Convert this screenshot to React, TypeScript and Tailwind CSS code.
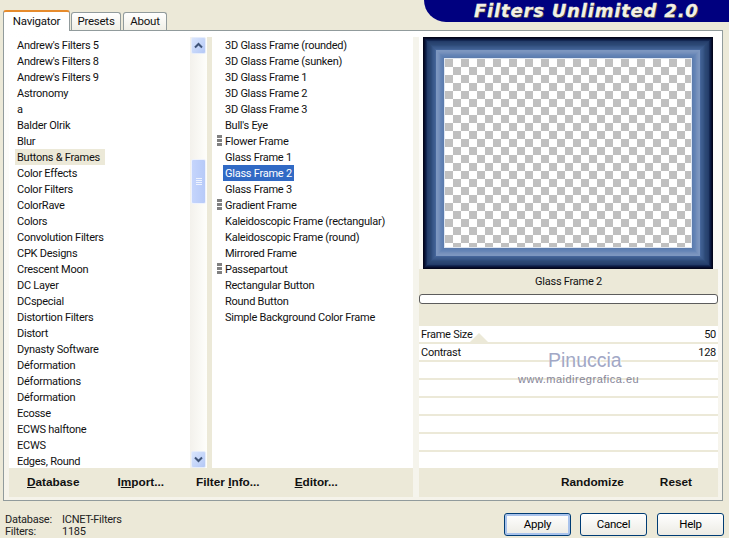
const leftItems = [
  "Andrew's Filters 5",
  "Andrew's Filters 8",
  "Andrew's Filters 9",
  'Astronomy',
  'a',
  'Balder Olrik',
  'Blur',
  'Buttons & Frames',
  'Color Effects',
  'Color Filters',
  'ColorRave',
  'Colors',
  'Convolution Filters',
  'CPK Designs',
  'Crescent Moon',
  'DC Layer',
  'DCspecial',
  'Distortion Filters',
  'Distort',
  'Dynasty Software',
  'Déformation',
  'Déformations',
  'Déformation',
  'Ecosse',
  'ECWS halftone',
  'ECWS',
  'Edges, Round',
];

const middleItems = [
  { name: '3D Glass Frame (rounded)' },
  { name: '3D Glass Frame (sunken)' },
  { name: '3D Glass Frame 1' },
  { name: '3D Glass Frame 2' },
  { name: '3D Glass Frame 3' },
  { name: "Bull's Eye" },
  { name: 'Flower Frame', marked: true },
  { name: 'Glass Frame 1' },
  { name: 'Glass Frame 2', selected: true },
  { name: 'Glass Frame 3' },
  { name: 'Gradient Frame', marked: true },
  { name: 'Kaleidoscopic Frame (rectangular)' },
  { name: 'Kaleidoscopic Frame (round)' },
  { name: 'Mirrored Frame' },
  { name: 'Passepartout', marked: true },
  { name: 'Rectangular Button' },
  { name: 'Round Button' },
  { name: 'Simple Background Color Frame' },
];

// concentric bands of the preview, outside to inside
const bands = [
  '#03061c', '#060d2c', '#0c1a40', '#142853', '#233c69', '#27416e', '#2a4572', '#2c4874',
  '#2f4d7c', '#365485', '#3b5a8b', '#3e5e90', '#45659a', '#7d97c0', '#7b95bf', '#7791bc',
  '#718dba', '#6887b7', '#6383b5', '#5f80b2', '#5c7cae', '#dfe6f0',
];

function ScrollArrow({ up }: { up?: boolean }) {
  return (
    <div className="h-[17px] w-[15px] mx-auto rounded-[2px] border border-[#e6edfb] bg-gradient-to-br from-[#d9e5fc] to-[#b4c8f6] flex items-center justify-center">
      <svg width="9" height="7" viewBox="0 0 9 7">
        <polyline
          points={up ? '1,5.5 4.5,2 8,5.5' : '1,1.5 4.5,5 8,1.5'}
          fill="none"
          stroke="#3f5478"
          strokeWidth="2"
        />
      </svg>
    </div>
  );
}

function Scrollbar() {
  return (
    <div className="w-[17px] shrink-0 bg-gradient-to-r from-[#f3f1ec] to-[#fefefb] flex flex-col">
      <ScrollArrow up />
      <div className="flex-1">
        <div className="mt-[105px] h-[45px] w-[15px] mx-auto rounded-[2px] border border-[#eef2fd] bg-gradient-to-r from-[#c5d5fc] to-[#b7caf8] flex flex-col items-center justify-center gap-px">
          <div className="h-px w-[6px] bg-[#eef3fe]" />
          <div className="h-px w-[6px] bg-[#eef3fe]" />
          <div className="h-px w-[6px] bg-[#eef3fe]" />
          <div className="h-px w-[6px] bg-[#eef3fe]" />
        </div>
      </div>
      <ScrollArrow />
    </div>
  );
}

function Marker() {
  return (
    <div className="absolute left-[-6px] top-[2px] w-[5px] flex flex-col gap-px">
      <div className="h-[3px] bg-[#808080]" />
      <div className="h-[3px] bg-[#808080]" />
      <div className="h-[3px] bg-[#808080]" />
    </div>
  );
}

function Preview() {
  return (
    <svg width="290" height="232" viewBox="0 0 290 232" className="block">
      <defs>
        <pattern id="checker" width="16" height="16" patternUnits="userSpaceOnUse" x="22" y="22">
          <rect width="16" height="16" fill="#ffffff" />
          <rect width="8" height="8" fill="#c0c0c0" />
          <rect x="8" y="8" width="8" height="8" fill="#c0c0c0" />
        </pattern>
      </defs>
      <rect width="290" height="232" fill="#05081f" />
      {bands.map((color, i) => (
        <rect key={i} x={i} y={i} width={290 - i * 2} height={232 - i * 2} fill={color} />
      ))}
      <rect x="22" y="22" width="246" height="188" fill="url(#checker)" />
    </svg>
  );
}

function DialogButton({ label, focused }: { label: string; focused?: boolean }) {
  return (
    <button
      className={`h-[23px] w-[67px] rounded-[3px] border border-[#003c74] bg-gradient-to-b from-white to-[#ecebe4] text-[11.5px] text-black ${
        focused ? 'shadow-[inset_0_0_0_2px_#a9c3ec]' : ''
      }`}
    >
      {label}
    </button>
  );
}

export default function App() {
  return (
    <div className="w-[729px] h-[538px] overflow-hidden bg-[#ece9d8] text-[#111] text-[11px] tracking-[-0.25px] font-['Roboto','Liberation_Sans',sans-serif]">
      {/* tabs + logo */}
      <div className="h-[30px] flex justify-between items-start">
        <div className="h-[30px] pl-[3px] flex items-end gap-px relative z-10">
          <div className="h-[21px] w-[67px] -mb-px rounded-t-[3px] border-x border-[#919b9c] border-t-[2px] border-t-[#e68b2c] bg-white flex items-center justify-center text-[11.5px]">
            Navigator
          </div>
          <div className="h-[18px] w-[50px] rounded-t-[3px] border border-b-0 border-[#919b9c] bg-gradient-to-b from-white to-[#f0efe6] flex items-center justify-center text-[11.5px]">
            Presets
          </div>
          <div className="ml-px h-[18px] w-[44px] rounded-t-[3px] border border-b-0 border-[#919b9c] bg-gradient-to-b from-white to-[#f0efe6] flex items-center justify-center text-[11.5px]">
            About
          </div>
        </div>
        <div className="h-[22px] w-[305px] rounded-bl-[28px] bg-[#00007f] pl-[50px] flex items-center">
          <span className="text-[18px] leading-none font-bold italic tracking-[0.8px] font-['DejaVu_Sans',sans-serif] text-[#f2f0e4] whitespace-nowrap [-webkit-text-stroke:0.3px_#f2f0e4] [text-shadow:1px_1px_0_#3a3a3a]">
            Filters Unlimited 2.0
          </span>
        </div>
      </div>

      {/* tab page */}
      <div className="ml-[3px] w-[720px] h-[471px] border border-[#919b9c] bg-gradient-to-b from-white to-[#f5f3ea] pt-[6px] pl-[5px] pr-[3px] pb-[3px] flex">
        <div className="w-[404px] shrink-0 flex flex-col">
          <div className="h-[431px] flex">
            <div className="w-[181px] shrink-0 bg-white pl-[6px] overflow-hidden">
              {leftItems.map((item, i) => (
                <div
                  key={i}
                  className={`h-[16px] leading-[18px] pl-[2px] whitespace-nowrap ${
                    item === 'Buttons & Frames' ? 'w-[90px] bg-[#ece9d8]' : ''
                  }`}
                >
                  {item}
                </div>
              ))}
            </div>
            <Scrollbar />
            <div className="w-[5px] shrink-0 bg-[#ece9d8]" />
            <div className="flex-1 bg-white pl-[11px] overflow-hidden">
              {middleItems.map((item) => (
                <div key={item.name} className="relative h-[16px] leading-[18px] whitespace-nowrap">
                  {item.marked && <Marker />}
                  <span className={`inline-block h-[16px] px-[2px] ${item.selected ? 'bg-[#316ac5] text-white' : ''}`}>
                    {item.name}
                  </span>
                </div>
              ))}
            </div>
          </div>
          <div className="flex-1 bg-[#ece9d8] pl-[18px] flex items-center text-[11.8px] tracking-normal font-bold font-['Liberation_Sans',sans-serif]">
            <span><u>D</u>atabase</span>
            <span className="ml-[38px]">I<u>m</u>port...</span>
            <span className="ml-[32px]">Filter <u>I</u>nfo...</span>
            <span className="ml-[35px]"><u>E</u>ditor...</span>
          </div>
        </div>

        <div className="w-[6px] shrink-0 bg-[#f5f4ec]" />

        <div className="relative w-[299px] shrink-0 flex flex-col">
          <div className="h-[232px] pl-[4px]">
            <Preview />
          </div>
          <div className="h-[57px] bg-[#ece9d8]">
            <div className="h-[25px] pt-[2px] flex items-center justify-center">Glass Frame 2</div>
            <div className="h-[10px] rounded-[3px] border border-[#5c5c5c] bg-white" />
          </div>
          <div className="flex-1 bg-[#ece9d8] flex flex-col gap-[2px]">
            <div className="relative h-[16px] bg-white px-[2px] flex justify-between leading-[18px]">
              <span>Frame Size</span>
              <span>50</span>
              <svg width="18" height="9" viewBox="0 0 18 9" className="absolute left-[51px] bottom-0">
                <polygon points="0,9 9,0 18,9" fill="#ece9d8" />
              </svg>
            </div>
            <div className="h-[16px] bg-white px-[2px] flex justify-between leading-[18px]">
              <span>Contrast</span>
              <span>128</span>
            </div>
            <div className="h-[16px] bg-white" />
            <div className="h-[16px] bg-white" />
            <div className="h-[16px] bg-white" />
            <div className="h-[16px] bg-white" />
            <div className="h-[16px] bg-white" />
            <div className="h-[16px] bg-white" />
          </div>
          <div className="h-[29px] bg-[#ece9d8] pr-[26px] flex items-center justify-end gap-[36px] text-[11.8px] tracking-normal font-bold font-['Liberation_Sans',sans-serif]">
            <span>Randomize</span>
            <span>Reset</span>
          </div>
          {/* watermark over the parameter rows */}
          <div className="absolute left-[99px] top-[311px] w-[120px] flex flex-col items-start tracking-normal font-['Liberation_Sans',sans-serif]">
            <span className="ml-[30px] text-[19.5px] leading-[24px] text-[#a2a8c6] [text-shadow:1px_1px_0_#ffffff]">
              Pinuccia
            </span>
            <span className="text-[11px] leading-[14px] tracking-[0.5px] text-[#85859a] whitespace-nowrap">
              www.maidiregrafica.eu
            </span>
          </div>
        </div>
      </div>

      {/* status + buttons */}
      <div className="h-[37px] pl-[5px] pr-[5px] flex justify-between">
        <div className="pt-[13px] leading-[12px] text-[#222]">
          <div className="flex">
            <span className="w-[57px]">Database:</span>
            <span>ICNET-Filters</span>
          </div>
          <div className="flex">
            <span className="w-[57px]">Filters:</span>
            <span>1185</span>
          </div>
        </div>
        <div className="pt-[12px] flex gap-[9px]">
          <DialogButton label="Apply" focused />
          <DialogButton label="Cancel" />
          <div className="ml-px">
            <DialogButton label="Help" />
          </div>
        </div>
      </div>
    </div>
  );
}
